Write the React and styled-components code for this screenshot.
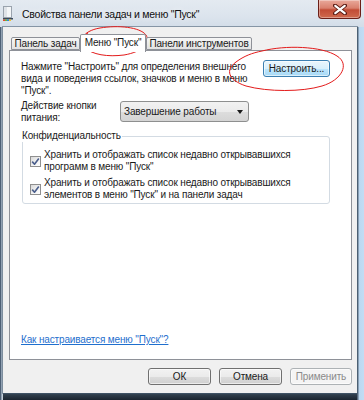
import React from 'react';
import styled, { createGlobalStyle } from 'styled-components';

const Global = createGlobalStyle`
  html, body { margin: 0; padding: 0; background: #ffffff; }
  body { font-family: "Liberation Sans", Arial, sans-serif; }
  * { box-sizing: border-box; }
`;

const Window = styled.div`
  position: relative;
  width: 364px;
  height: 400px;
  overflow: hidden;
  display: flex;
  flex-direction: column;
  background: #cfdae5;
`;

const TitleBar = styled.div`
  height: 27px;
  flex: none;
  display: flex;
  align-items: center;
  padding-left: 3px;
  background: linear-gradient(to bottom, #e4eaf1 0%, #dce4ed 60%, #d3dde8 100%);
`;

const TitleIcon = styled.svg`
  width: 10px;
  height: 15px;
  flex: none;
`;

const TitleText = styled.div`
  margin-left: 9px;
  font-size: 10.5px;
  letter-spacing: -0.25px;
  color: #111;
  white-space: nowrap;
  text-shadow: 0 0 6px rgba(255,255,255,0.9);
`;

const CloseButton = styled.div`
  align-self: flex-start;
  margin-left: auto;
  margin-right: 3px;
  width: 43px;
  height: 19px;
  border: 1px solid #6b1f18;
  border-top: none;
  border-radius: 0 0 4px 4px;
  background: linear-gradient(to bottom, #e9a99b 0%, #d9806e 45%, #c24c36 55%, #cf6a4e 100%);
  display: flex;
  align-items: center;
  justify-content: center;
  box-shadow: inset 0 0 0 1px rgba(255,255,255,0.35);
`;

const Frame = styled.div`
  flex: 1;
  display: flex;
  padding: 0 7px 7px 3px;
  background:
    linear-gradient(to right, #2f4155 0, #6d8096 1px, #b7c4d0 2px, #cdd7e1 3px, rgba(0,0,0,0) 3px),
    linear-gradient(to left, #c2ddf4 0, #bcd8f1 5px, #56687b 6px, #56687b 7px, rgba(0,0,0,0) 7px),
    linear-gradient(to top, #1b2530 0, #2e3c4a 5px, #3c4e60 7px, rgba(0,0,0,0) 7px),
    #cdd8e3;
`;

const Client = styled.div`
  flex: 1;
  display: flex;
  flex-direction: column;
  background: #f0f0f0;
  padding: 7px 5px 8px 6px;
  box-shadow: 0 0 0 1px rgba(70, 90, 110, 0.55);
  font-size: 10px;
  letter-spacing: -0.15px;
  color: #1a1a1a;
`;

const TabRow = styled.div`
  height: 16px;
  flex: none;
  display: flex;
  align-items: flex-end;
  padding-left: 2px;
  position: relative;
  z-index: 1;
`;

const Tab = styled.div`
  width: ${p => p.$w}px;
  height: ${p => (p.$active ? 18 : 13)}px;
  margin-bottom: ${p => (p.$active ? -2 : 0)}px;
  border: 1px solid #8e9198;
  border-bottom: ${p => (p.$active ? 'none' : '1px solid #8e9198')};
  border-radius: 2px 2px 0 0;
  background: ${p => (p.$active ? '#ffffff' : 'linear-gradient(to bottom, #f7f7f7 0%, #ececec 50%, #e2e2e2 100%)')};
  white-space: nowrap;
  display: flex;
  align-items: center;
  justify-content: center;
  padding-bottom: ${p => (p.$active ? 3 : 0)}px;
`;

const Panel = styled.div`
  height: 310px;
  flex: none;
  border: 1px solid #8e9198;
  background: #ffffff;
  padding: 10px 21px 13px 11px;
  display: flex;
  flex-direction: column;
`;

const TopRow = styled.div`
  display: flex;
  justify-content: space-between;
  align-items: flex-start;
`;

const Text = styled.div`
  line-height: 12px;
  white-space: nowrap;
`;

const Button = styled.div`
  width: ${p => p.$w}px;
  height: 17px;
  margin-top: ${p => p.$mt || 0}px;
  border: 1px solid ${p => (p.$focus ? '#3c7fb1' : p.$disabled ? '#adb2b5' : '#707070')};
  border-radius: 3px;
  background: ${p =>
    p.$focus
      ? 'linear-gradient(to bottom, #eaf6fd 0%, #d9f0fc 50%, #bee6fd 51%, #a7d9f5 100%)'
      : p.$disabled
      ? '#f4f4f4'
      : 'linear-gradient(to bottom, #f2f2f2 0%, #ebebeb 50%, #dddddd 51%, #cfcfcf 100%)'};
  color: ${p => (p.$disabled ? '#8a8a8a' : '#1a1a1a')};
  display: flex;
  align-items: center;
  justify-content: center;
  white-space: nowrap;
  box-shadow: inset 0 0 0 1px rgba(255,255,255,0.6);
  flex: none;
`;

const PowerRow = styled.div`
  margin-top: 3px;
  display: grid;
  grid-template-columns: 99px auto;
  align-items: start;
`;

const Select = styled.div`
  margin-top: 1px;
  width: 129px;
  height: 21px;
  border: 1px solid #8e8f8f;
  border-radius: 3px;
  background: linear-gradient(to bottom, #f2f2f2 0%, #ebebeb 50%, #dddddd 51%, #d4d4d4 100%);
  display: flex;
  align-items: center;
  justify-content: space-between;
  padding: 0 5px 0 3px;
  white-space: nowrap;
`;

const Arrow = styled.span`
  width: 0;
  height: 0;
  border-left: 3.5px solid transparent;
  border-right: 3.5px solid transparent;
  border-top: 4px solid #1a1a1a;
`;

const Group = styled.fieldset`
  margin: 6px 0 0 1px;
  width: 308px;
  padding: 7px 0 2px 0;
  border: 1px solid #d3dbe3;
  border-radius: 3px;
  min-width: 0;
`;

const Legend = styled.legend`
  margin-left: -2px;
  padding: 0 1px;
  line-height: 12px;
`;

const CheckItem = styled.div`
  display: flex;
  align-items: flex-start;
  gap: 3px;
  padding-left: 7px;
  margin-top: ${p => p.$mt || 0}px;
`;

const CheckBox = styled.div`
  width: 11px;
  height: 11px;
  margin-top: 7px;
  flex: none;
  border: 1px solid #8f8f8f;
  background: linear-gradient(135deg, #d8d8d8 0%, #f4f4f4 60%, #ffffff 100%);
  display: flex;
  align-items: center;
  justify-content: center;
`;

const Link = styled.a`
  margin-top: auto;
  line-height: 12px;
  color: #1f6fce;
  text-decoration: underline;
  white-space: nowrap;
  cursor: pointer;
`;

const ButtonRow = styled.div`
  margin-top: 8px;
  display: flex;
  justify-content: flex-end;
  gap: 8px;
`;

const Overlay = styled.svg`
  position: absolute;
  left: 0;
  top: 0;
  pointer-events: none;
`;

const Check = () => (
  <svg width="9" height="9" viewBox="0 0 9 9">
    <path d="M1.2 4.6 L3.5 7.2 L7.8 1.4" fill="none" stroke="#4a5e8c" strokeWidth="1.6" strokeLinejoin="round" />
  </svg>
);

export default function App() {
  return (
    <>
      <Global />
      <Window>
        <TitleBar>
          <TitleIcon viewBox="0 0 10 15">
            <rect x="0.5" y="0.5" width="8" height="11" fill="#f4f6f8" stroke="#9aa3ad" />
            <rect x="1" y="1" width="3" height="10" fill="#dfe3e8" />
            <rect x="0" y="12" width="10" height="1.5" fill="#3d4a58" />
            <rect x="0" y="13.5" width="2" height="1.5" fill="#e24b2d" />
            <rect x="2" y="13.5" width="2" height="1.5" fill="#6bb33a" />
            <rect x="4" y="13.5" width="2" height="1.5" fill="#2f86d6" />
            <rect x="6" y="13.5" width="2" height="1.5" fill="#f2c12e" />
          </TitleIcon>
          <TitleText>Свойства панели задач и меню "Пуск"</TitleText>
          <CloseButton>
            <svg width="14" height="11" viewBox="0 0 14 11">
              <path d="M2 1.5 L12 9.5 M12 1.5 L2 9.5" stroke="#5a1a12" strokeWidth="4" strokeLinecap="round" />
              <path d="M2.3 1.8 L11.7 9.2 M11.7 1.8 L2.3 9.2" stroke="#ffffff" strokeWidth="2.2" strokeLinecap="round" />
            </svg>
          </CloseButton>
        </TitleBar>
        <Frame>
          <Client>
            <TabRow>
              <Tab $w={69}>Панель задач</Tab>
              <Tab $w={66} $active>Меню "Пуск"</Tab>
              <Tab $w={106}>Панели инструментов</Tab>
            </TabRow>
            <Panel>
              <TopRow>
                <Text>
                  Нажмите "Настроить" для определения внешнего<br />
                  вида и поведения ссылок, значков и меню в меню<br />
                  "Пуск".
                </Text>
                <Button $w={67} $mt={-1} $focus>Настроить...</Button>
              </TopRow>
              <PowerRow>
                <Text>
                  Действие кнопки<br />
                  питания:
                </Text>
                <Select>
                  <span>Завершение работы</span>
                  <Arrow />
                </Select>
              </PowerRow>
              <Group>
                <Legend>Конфиденциальность</Legend>
                <CheckItem>
                  <CheckBox><Check /></CheckBox>
                  <Text>
                    Хранить и отображать список недавно открывавшихся<br />
                    программ в меню "Пуск"
                  </Text>
                </CheckItem>
                <CheckItem $mt={4}>
                  <CheckBox><Check /></CheckBox>
                  <Text>
                    Хранить и отображать список недавно открывавшихся<br />
                    элементов в меню "Пуск" и на панели задач
                  </Text>
                </CheckItem>
              </Group>
              <Link>Как настраивается меню "Пуск"?</Link>
            </Panel>
            <ButtonRow>
              <Button $w={63}>ОК</Button>
              <Button $w={63}>Отмена</Button>
              <Button $w={62} $disabled>Применить</Button>
            </ButtonRow>
          </Client>
        </Frame>
        <Overlay width="364" height="400" viewBox="0 0 364 400">
          <path
            d="M86 50 C77 42, 82 31, 100 28 C118 25, 140 27, 146 35 C151 43, 142 52, 124 55 C108 57, 92 55, 84 47 C80 42, 82 36, 88 33"
            fill="none" stroke="#e31b1b" strokeWidth="1"
          />
          <path
            d="M262 51 C285 45, 322 46, 337 56 C350 64, 342 80, 322 86 C302 92, 268 92, 246 86 C228 80, 225 70, 236 62 C244 56, 252 53, 262 51"
            fill="none" stroke="#e31b1b" strokeWidth="1"
          />
        </Overlay>
      </Window>
    </>
  );
}
